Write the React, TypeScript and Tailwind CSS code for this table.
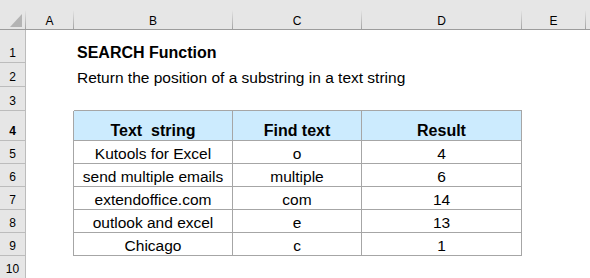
import React from "react";

const font = { fontFamily: '"Liberation Sans", Arial, sans-serif' };

const cols = [
  { key: "A", w: "w-[48px]" },
  { key: "B", w: "w-[159px]" },
  { key: "C", w: "w-[129px]" },
  { key: "D", w: "w-[160px]" },
  { key: "E", w: "w-[64px]" },
];

const data = [
  ["Kutools for Excel", "o", "4"],
  ["send multiple emails", "multiple", "6"],
  ["extendoffice.com", "com", "14"],
  ["outlook and excel", "e", "13"],
  ["Chicago", "c", "1"],
];

function Sep() {
  return <div className="h-[19px] w-px shrink-0 self-end bg-gradient-to-b from-[#e6e6e6] to-[#a3a3a3]" />;
}

function ColHeader() {
  return (
    <div className="flex h-[30px] border-b border-[#9c9c9c] bg-[#e6e6e6] text-[12px] leading-[14px] text-black">
      <div className="flex w-[26px] shrink-0">
        <div className="flex flex-1 items-end justify-end pb-[2px] pr-[3px]">
          <svg width="12" height="13" viewBox="0 0 12 13">
            <polygon points="12,0 12,13 0,13" fill="#b4b4b4" />
          </svg>
        </div>
        <Sep />
      </div>
      {cols.map((c) => (
        <div key={c.key} className={`flex shrink-0 ${c.w}`}>
          <div className="flex flex-1 items-end justify-center pb-[1px]">{c.key}</div>
          <Sep />
        </div>
      ))}
      <div className="flex-1" />
    </div>
  );
}

function RowNum({ n }: { n: number }) {
  return (
    <div className="flex w-[26px] shrink-0 items-end justify-center border-b border-r border-[#bcbcbc] bg-[#e6e6e6] pb-[2px] text-[12px] leading-[14px] text-black">
      {n}
    </div>
  );
}

export default function App() {
  return (
    <div className="h-[278px] w-full overflow-hidden bg-white text-black" style={font}>
      <ColHeader />

      <div className="flex h-[33px]">
        <RowNum n={1} />
        <div className="w-[48px] shrink-0" />
        <div className="flex w-[159px] shrink-0 items-end overflow-visible whitespace-nowrap pb-[2px] pl-[3px] text-[16px] font-bold leading-[17px]">
          SEARCH Function
        </div>
      </div>

      <div className="flex h-[24px]">
        <RowNum n={2} />
        <div className="w-[48px] shrink-0" />
        <div className="flex w-[159px] shrink-0 items-end overflow-visible whitespace-nowrap pb-[1px] pl-[3px] text-[15.5px] leading-[17px]">
          Return the position of a substring in a text string
        </div>
      </div>

      <div className="flex h-[24px]">
        <RowNum n={3} />
        <div className="w-[48px] shrink-0" />
        <div className="w-[159px] shrink-0 border-b border-[#a6a6a6]" />
        <div className="w-[129px] shrink-0 border-b border-[#a6a6a6]" />
        <div className="w-[160px] shrink-0 border-b border-[#a6a6a6]" />
      </div>

      <div className="flex h-[30px] text-[16px] font-bold leading-[17px]">
        <RowNum n={4} />
        <div className="w-[48px] shrink-0 border-r border-[#a6a6a6]" />
        <div className="flex w-[159px] shrink-0 items-end justify-center whitespace-pre border-b border-r border-[#a6a6a6] bg-[#ccebfe] pb-[1px]">
          Text  string
        </div>
        <div className="flex w-[129px] shrink-0 items-end justify-center border-b border-r border-[#a6a6a6] bg-[#ccebfe] pb-[1px]">
          Find text
        </div>
        <div className="flex w-[160px] shrink-0 items-end justify-center border-b border-r border-[#a6a6a6] bg-[#ccebfe] pb-[1px]">
          Result
        </div>
      </div>

      {data.map(([a, b, c], i) => (
        <div key={a} className="flex h-[23px] text-[15.5px] leading-[17px]">
          <RowNum n={i + 5} />
          <div className="w-[48px] shrink-0 border-r border-[#a6a6a6]" />
          <div className="flex w-[159px] shrink-0 items-end justify-center whitespace-nowrap border-b border-r border-[#a6a6a6] pb-[1px]">
            {a}
          </div>
          <div className="flex w-[129px] shrink-0 items-end justify-center border-b border-r border-[#a6a6a6] pb-[1px]">
            {b}
          </div>
          <div className="flex w-[160px] shrink-0 items-end justify-center border-b border-r border-[#a6a6a6] pb-[1px]">
            {c}
          </div>
        </div>
      ))}

      <div className="flex h-[23px]">
        <RowNum n={10} />
      </div>
    </div>
  );
}
